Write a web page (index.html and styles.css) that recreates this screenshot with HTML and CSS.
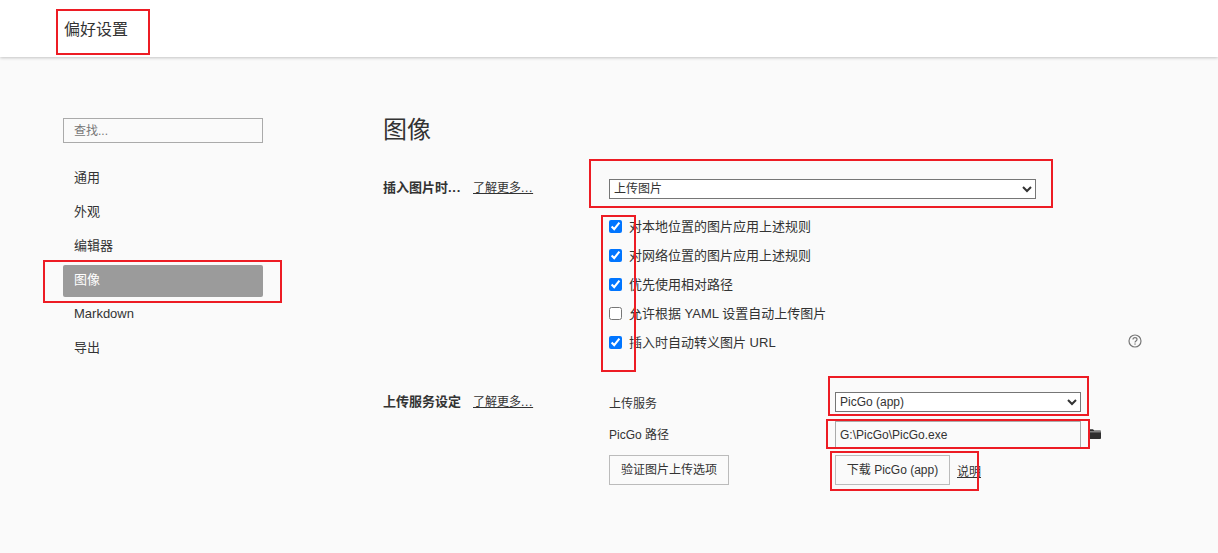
FILE: index.html
```html
<!DOCTYPE html>
<html lang="zh-CN">
<head>
  <meta charset="UTF-8" />
  <title>偏好设置</title>
  <link rel="stylesheet" href="styles.css">
</head>
<body>
  <header class="top-bar">偏好设置</header>

  <div class="content">
    <aside class="sidebar">
      <input class="search" type="text" placeholder="查找..." />
      <nav class="nav">
        <a class="nav-item">通用</a>
        <a class="nav-item">外观</a>
        <a class="nav-item">编辑器</a>
        <a class="nav-item active">图像</a>
        <a class="nav-item">Markdown</a>
        <a class="nav-item">导出</a>
      </nav>
    </aside>

    <main class="main">
      <h1>图像</h1>

      <section class="setting insert">
        <div class="setting-label"><b>插入图片时<span class="dots">...</span></b><a class="link">了解更多<span class="dots">...</span></a></div>
        <div class="setting-body">
          <select class="select wide"><option>上传图片</option></select>
          <div class="checks">
            <label class="check"><input type="checkbox" checked /><span>对本地位置的图片应用上述规则</span></label>
            <label class="check"><input type="checkbox" checked /><span>对网络位置的图片应用上述规则</span></label>
            <label class="check"><input type="checkbox" checked /><span>优先使用相对路径</span></label>
            <label class="check"><input type="checkbox" /><span>允许根据 YAML 设置自动上传图片</span></label>
            <label class="check"><input type="checkbox" checked /><span>插入时自动转义图片 URL</span>
              <svg class="help" width="14" height="14" viewBox="0 0 14 14">
                <circle cx="7" cy="7" r="6" fill="none" stroke="#777" stroke-width="1.2" />
                <path d="M5 5.6c0-1.2.9-1.9 2-1.9s2 .7 2 1.7c0 1.500-2 1.500-2 3" fill="none" stroke="#777" stroke-width="1.2" />
                <rect x="6.400" y="9.400" width="1.200" height="1.300" fill="#777" />
              </svg>
            </label>
          </div>
        </div>
      </section>

      <section class="setting upload">
        <div class="setting-label"><b>上传服务设定</b><a class="link">了解更多<span class="dots">...</span></a></div>
        <div class="upload-grid">
          <span>上传服务</span>
          <select class="select"><option>PicGo (app)</option></select>
          <span>PicGo 路径</span>
          <div class="path-row">
            <input class="path" type="text" value="G:\PicGo\PicGo.exe" />
            <svg class="folder" width="12" height="10" viewBox="0 0 12 10">
              <path d="M0 1.200C0 .6.4.2 1 .2h3l1.200 1.300H11c.6 0 1 .4 1 1V9c0 .5-.4 1-1 1H1c-.6 0-1-.5-1-1z" fill="#2f2f2f" />
              <rect x="0" y="2.600" width="12" height=".6" fill="#fafafa" />
            </svg>
          </div>
          <button class="btn verify">验证图片上传选项</button>
          <div class="download-row">
            <button class="btn download">下载 PicGo (app)</button>
            <a class="link">说明</a>
          </div>
        </div>
      </section>
    </main>
  </div>

  <!-- red boxes drawn over the screenshot -->
  <div class="mark m-title"></div>
  <div class="mark m-nav"></div>
  <div class="mark m-select"></div>
  <div class="mark m-checks"></div>
  <div class="mark m-service"></div>
  <div class="mark m-path"></div>
  <div class="mark m-download"></div>
</body>
</html>
```

FILE: styles.css
```css
html, body {
  margin: 0;
  padding: 0;
  height: 100%;
  overflow: hidden;
}

body {
  position: relative;
  background: #fafafa;
  color: #333;
  font-family: "Liberation Sans", "Noto Sans CJK SC", sans-serif;
  font-size: 13px;
}

.top-bar {
  height: 57px;
  box-sizing: border-box;
  padding: 20px 0 0 64px;
  background: #fff;
  font-size: 16px;
  line-height: 20px;
  box-shadow: 0 1px 3px rgba(0, 0, 0, 0.22);
}

.content {
  display: flex;
}

.sidebar {
  width: 200px;
  margin: 61px 120px 0 63px;
}

.search {
  display: block;
  box-sizing: border-box;
  width: 200px;
  height: 25px;
  padding: 0 10px;
  border: 1px solid #aaa;
  background: #fafafa;
  font: 12px "Liberation Sans", "Noto Sans CJK SC", sans-serif;
  outline: none;
}

.search::placeholder {
  color: #777;
}

.nav {
  display: flex;
  flex-direction: column;
  gap: 2px;
  margin-top: 20px;
}

.nav-item {
  height: 32px;
  padding-left: 11px;
  line-height: 30px;
  border-radius: 2px;
}

.nav-item.active {
  background: #9b9b9b;
  color: #fff;
}

.main {
  flex: 1;
}

h1 {
  margin: 57px 0 0;
  font-size: 24px;
  font-weight: 400;
  line-height: 32px;
}

.setting {
  display: flex;
}

.setting-label {
  display: flex;
  gap: 12px;
  width: 226px;
  flex: none;
  line-height: 18px;
}

.setting-label b {
  width: 78px;
}

.dots {
  letter-spacing: 0.7px;
}

.link {
  color: #333;
  text-decoration: underline;
  font-size: 12px;
}

.insert {
  margin-top: 17px;
}

.insert .setting-label {
  padding-top: 16px;
}

.setting-body {
  width: 533px;
  padding-top: 16px;
}

.select {
  display: block;
  box-sizing: border-box;
  width: 246px;
  height: 20px;
  padding: 0;
  border: 1px solid #767676;
  border-radius: 0;
  background-color: #fff;
  color: #333;
  font: 12px "Liberation Sans", "Noto Sans CJK SC", sans-serif;
}

.select.wide {
  width: 427px;
}

.checks {
  margin-top: 12px;
}

.check {
  display: flex;
  align-items: center;
  height: 29px;
  gap: 7px;
}

.check input {
  width: 13px;
  height: 13px;
  margin: 1px 0 0;
  accent-color: #0075ff;
}

.help {
  margin-left: auto;
  margin-bottom: 2px;
}

.upload {
  margin-top: 36px;
}

.upload .setting-label {
  padding-top: 1px;
}

.upload-grid {
  display: grid;
  grid-template-columns: 226px 300px;
  grid-template-rows: 20px 27px 30px;
  row-gap: 8px;
  align-items: center;
  font-size: 12px;
}

.path-row {
  display: flex;
  align-items: center;
  gap: 8px;
  margin-top: 1px;
}

.path {
  box-sizing: border-box;
  width: 246px;
  height: 27px;
  padding: 1px 4px 0;
  border: 1px solid #aaa;
  background: #fafafa;
  color: #333;
  font: 12px "Liberation Sans", "Noto Sans CJK SC", sans-serif;
  outline: none;
}

.btn {
  box-sizing: border-box;
  height: 30px;
  padding: 0 0 3px;
  border: 1px solid #bbb;
  background: #fafafa;
  color: #333;
  font: 12px "Liberation Sans", "Noto Sans CJK SC", sans-serif;
}

.verify {
  width: 120px;
}

.download {
  width: 115px;
}

.download-row {
  display: flex;
  align-items: center;
  gap: 7px;
}

/* annotations */
.mark {
  position: absolute;
  box-sizing: border-box;
  border: 2px solid #ed1c24;
}

.m-title { left: 56px; top: 9px; width: 94px; height: 46px; }
.m-nav { left: 43px; top: 260px; width: 239px; height: 43px; }
.m-select { left: 589px; top: 159px; width: 464px; height: 49px; }
.m-checks { left: 601px; top: 215px; width: 35px; height: 157px; }
.m-service { left: 828px; top: 376px; width: 261px; height: 40px; }
.m-path { left: 826px; top: 419px; width: 264px; height: 30px; }
.m-download { left: 830px; top: 451px; width: 149px; height: 40px; }
```
